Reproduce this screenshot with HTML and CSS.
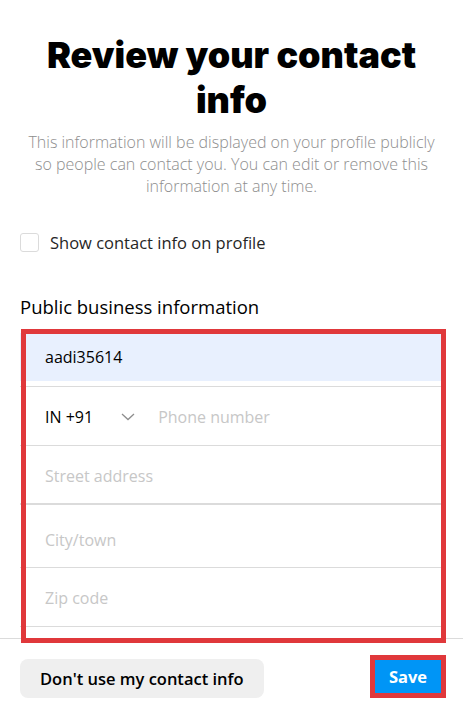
FILE: index.html
```html
<!DOCTYPE html>
<html lang="en">
<head>
<meta charset="utf-8">
<title>Review your contact info</title>
<link rel="stylesheet" href="styles.css">
</head>
<body>
<div class="page">
  <main class="content">
    <h1 class="title">Review your contact info</h1>
    <p class="subtitle">This information will be displayed on your profile publicly so people can contact you. You can edit or remove this information at any time.</p>
    <label class="check-row">
      <span class="checkbox"></span>
      <span class="check-label">Show contact info on profile</span>
    </label>
    <h2 class="section-title">Public business information</h2>
    <div class="fields">
      <div class="row row-email">
        <div class="autofill">aadi35614</div>
      </div>
      <div class="row">
        <span class="value">IN +91</span>
        <svg class="chevron" width="14" height="8" viewBox="0 0 14 8"><polyline points="1,1 7,6.5 13,1" fill="none" stroke="#8e8e8e" stroke-width="1.3"/></svg>
        <span class="placeholder">Phone number</span>
      </div>
      <div class="row row-street">
        <span class="placeholder">Street address</span>
      </div>
      <div class="row row-city">
        <span class="placeholder">City/town</span>
      </div>
      <div class="row">
        <span class="placeholder">Zip code</span>
      </div>
      <div class="row"></div>
    </div>
  </main>
  <footer class="footer">
    <button class="btn btn-secondary">Don't use my contact info</button>
    <button class="btn btn-primary">Save</button>
  </footer>
  <div class="highlight"></div>
</div>
</body>
</html>
```
FILE: styles.css
```css
* { box-sizing: border-box; }
html, body { margin: 0; padding: 0; background: #fff; }
body {
  font-family: "Open Sans", "Noto Sans", sans-serif;
  color: #262626;
}
.page {
  position: relative;
  width: 463px;
  height: 716px;
  display: flex;
  flex-direction: column;
  overflow: hidden;
}
.content {
  flex: 0 0 638px;
  overflow: hidden;
  padding: 0 20px;
}
.title {
  margin: 33px 0 0;
  font-family: "Inter", sans-serif;
  font-weight: 900;
  font-size: 36px;
  line-height: 45px;
  text-align: center;
  color: #000;
}
.subtitle {
  margin: 8px 0 0;
  font-size: 16px;
  font-weight: 300;
  line-height: 22px;
  text-align: center;
  color: #8e8e8e;
}
.check-row {
  display: flex;
  align-items: center;
  gap: 11px;
  margin-top: 36px;
  height: 19px;
}
.checkbox {
  width: 19px;
  height: 19px;
  border: 1px solid #dbdbdb;
  border-radius: 3px;
  flex: none;
}
.check-label {
  font-size: 16.5px;
  color: #262626;
}
.section-title {
  margin: 43px 0 0;
  font-size: 18.5px;
  font-weight: 400;
  line-height: 24px;
  color: #000;
}
.fields {
  margin-top: 11px;
}
.row {
  display: flex;
  align-items: flex-start;
  height: 59px;
  padding: 20px 25px 0;
  border-bottom: 1px solid #dbdbdb;
  font-size: 16px;
  line-height: 20px;
}
.row-email {
  height: 57px;
  padding: 3px 0 0;
}
.row-street { height: 59px; border-bottom-width: 2px; }
.row-city { height: 63px; padding-top: 25px; }
.autofill {
  width: 100%;
  height: 48px;
  background: #e8f0fe;
  padding: 14px 25px;
  color: #000;
}
.value { color: #000; }
.chevron { margin: 6px 0 0 28px; }
.placeholder { color: #c7c7c7; }
.chevron + .placeholder { margin-left: 23px; }
.footer {
  flex: 1;
  border-top: 1px solid #dbdbdb;
  display: flex;
  justify-content: space-between;
  align-items: flex-end;
  padding: 0 17px 18px 20px;
}
.btn {
  font-family: "Open Sans", "Noto Sans", sans-serif;
  font-size: 16.5px;
  cursor: pointer;
}
.btn-secondary {
  height: 39px;
  padding: 0 20px;
  border: none;
  border-radius: 8px;
  background: #efefef;
  color: #000;
  font-weight: 600;
}
.btn-primary {
  width: 76px;
  height: 43px;
  border: 5px solid #e0383b;
  border-radius: 0;
  background: #0095f6;
  color: #fff;
  font-weight: 700;
  padding: 0;
}
.highlight {
  position: absolute;
  left: 21px;
  top: 329px;
  width: 425px;
  height: 314px;
  border: 5px solid #e0383b;
  pointer-events: none;
}
```
